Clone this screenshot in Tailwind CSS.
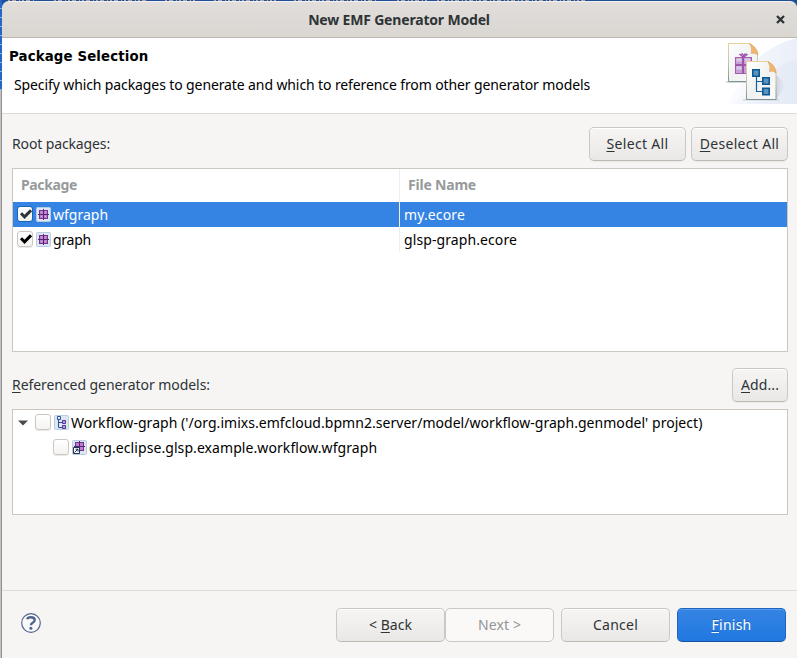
<!DOCTYPE html>
<html lang="en">
<head>
<meta charset="utf-8">
<title>New EMF Generator Model</title>
<script src="https://cdn.jsdelivr.net/npm/@tailwindcss/browser@4"></script>
</head>
<body class="h-[658px] w-[797px] overflow-hidden bg-[#1f55a5] font-['Noto_Sans',sans-serif] text-[14px] leading-5 text-[#2e3436]">
<svg width="0" height="0" class="absolute">
  <defs>
    <symbol id="pkg" viewBox="0 0 15 15">
      <rect x=".5" y=".5" width="14" height="14" rx="1" fill="#dce7f2" stroke="#b9cde2"/>
      <rect x="3.5" y="3.5" width="8" height="8" fill="#b982c8" stroke="#733291"/>
      <path d="M7.5 2v11M2 7.5h11" stroke="#5a2378"/>
      <path d="M5 5h1M9 5h1M5 9.5h1M9 9.5h1" stroke="#d3a8dc"/>
    </symbol>
  </defs>
</svg>
<div class="relative h-full w-full overflow-hidden">
  <div class="absolute inset-x-0 top-0 h-[3px] bg-[#1f4f96]"></div>
  <svg class="absolute top-0 left-0" width="600" height="2" viewBox="0 0 600 2"><path d="M8 .5h28M54 .5h92M165 .5h31M214 .5h62M294 .5h84M397 .5h32M437 .5h150" stroke="#a9a6ac" stroke-dasharray="2 2 4 3 1 2"/></svg>
  <div class="absolute top-0 left-0 h-[90px] w-[2px] bg-[repeating-linear-gradient(#2468c4_0_8px,#8fb0dc_8px_9px)]"></div>
  <div class="absolute top-[90px] bottom-0 left-0 w-[2px] bg-linear-to-r from-[#c4c4c4] from-50% to-[#8f8f8f] to-50%"></div>

  <div class="relative ml-[2px] flex h-full flex-col pt-[1px]">
    <header class="relative flex h-[37px] shrink-0 items-center justify-center rounded-t-[7px] border-t border-b border-t-[#f3f1f0] border-b-[#bfb8b1] bg-linear-to-b from-[#e1dedb] to-[#dad6d2] pr-[1px]">
      <h1 class="mt-px text-[14px] font-bold tracking-[-0.18px]">New EMF Generator Model</h1>
      <svg class="absolute top-[13px] right-[12px]" width="9" height="9" viewBox="0 0 9 9"><path d="M1 1l7 7M8 1L1 8" stroke="#2e3436" stroke-width="2.3"/></svg>
    </header>

    <section class="flex h-[76px] shrink-0 justify-between border-b border-[#dcdcda] bg-white text-black">
      <div>
        <h2 class="mt-[9px] ml-[7px] font-['DejaVu_Sans',sans-serif] text-[13.33px] font-bold tracking-[0.13px]">Package Selection</h2>
        <p class="mt-[8px] ml-[12px] whitespace-nowrap tracking-[-0.109px]">Specify which packages to generate and which to reference from other generator models</p>
      </div>
      <svg width="75" height="66" viewBox="722 38 75 66" class="shrink-0">
        <defs>
          <linearGradient id="wash" gradientUnits="userSpaceOnUse" x1="722" x2="797" y1="0" y2="0"><stop offset="0" stop-color="#dfe6f6" stop-opacity="0"/><stop offset=".5" stop-color="#dfe6f6" stop-opacity=".5"/><stop offset="1" stop-color="#dce4f5" stop-opacity=".75"/></linearGradient>
          <linearGradient id="sheet" x1="0" x2="1" y1="0" y2="1"><stop offset="0" stop-color="#fff"/><stop offset=".5" stop-color="#f0f2f1"/><stop offset="1" stop-color="#fbfbfa"/></linearGradient>
          <linearGradient id="edge" x1="0" x2="0" y1="0" y2="1"><stop offset="0" stop-color="#ecd09a"/><stop offset=".5" stop-color="#c2c3ae"/><stop offset="1" stop-color="#7f9490"/></linearGradient>
          <linearGradient id="shade" x1="0" x2="1" y1="0" y2="0"><stop offset="0" stop-color="#a9acb8" stop-opacity=".7"/><stop offset="1" stop-color="#c5cad8" stop-opacity="0"/></linearGradient>
        </defs>
        <path d="M722 104C742 92 745 68 763 54Q780 42 797 38V104z" fill="url(#wash)" opacity=".8"/>
        <path d="M722 104C765 93 768 63 797 60V104z" fill="url(#wash)" opacity=".6"/>
        <path d="M726 81h22v2h-22z" fill="#bfc0cc" opacity=".6"/>
        <path d="M776 75l10 9-10 16z" fill="url(#shade)" opacity=".6"/>
        <path d="M743 99h36v1.500h-36z" fill="#b8bbc8" opacity=".5"/>
        <path d="M728.500 43.500h21.500q5 4 7.500 10v28h-29z" fill="url(#sheet)" stroke="url(#edge)"/>
        <path d="M749.500 43.500q8 4 8.500 11.500q-3.500-3-6.500-1.500q1-6-2-10z" fill="#f2b56e" stroke="#d99e58" stroke-width=".6"/>
        <g stroke="#a45db0" fill="#c8a0d6"><rect x="735.500" y="57.500" width="7" height="7"/><rect x="743.500" y="57.500" width="8" height="7"/><rect x="735.500" y="65.500" width="7" height="8"/><rect x="743.500" y="65.500" width="8" height="8"/></g>
        <path d="M736.500 58.500h5v3h-5zM745 58.500h5v3h-5zM736.500 66.500h5v3h-5z" fill="#dccbe8"/>
        <path d="M743 57v17M735 65h17" stroke="#9a52a8" stroke-width="1.200"/>
        <path d="M743 57l-3-2.500 2.500-.5 1 2 1.500-2 2 .5-3 2.500" stroke="#9b4dab" fill="none" stroke-width="1.200"/>
        <path d="M746.500 61.500h21.500q5.500 4 8 10v28h-29.500z" fill="url(#sheet)" stroke="url(#edge)"/>
        <path d="M768 61.500q8 4 8 11.500q-3-3-6.500-1.500q1.500-5-1.500-10z" fill="#f2b56e" stroke="#d99e58" stroke-width=".6"/>
        <path d="M756.500 76v15.500h7M756.500 81.500h7" stroke="#16609b" fill="none" stroke-width="1.200"/>
        <g fill="#5794c2" stroke="#115892" stroke-width="1.600"><path d="M752.800 69.800h6.400v6.400h-6.400zM762.800 77.800h6.400v6.400h-6.400zM762.800 88.300h6.400v6.400h-6.400z"/></g>
      </svg>
    </section>

    <main class="flex h-[477px] shrink-0 flex-col border-b border-[#dcdcda] bg-[#f6f5f4] pr-[9px] pl-[10px]">
      <div class="mt-[13px] flex h-[34px] shrink-0 items-center">
        <span class="flex-1 tracking-[-0.13px]">Root packages:</span>
        <button class="mr-[5px] h-[34px] w-[97px] rounded-[5px] border border-[#cdc7c2] border-b-[#bfb8b1] bg-linear-to-b from-[#f6f5f4] to-[#eae8e6] tracking-[0.333px] shadow-[inset_0_1px_#fff,0_1px_1px_#0000000c]"><span class="underline underline-offset-2">S</span>elect All</button>
        <button class="h-[34px] w-[97px] rounded-[5px] border border-[#cdc7c2] border-b-[#bfb8b1] bg-linear-to-b from-[#f6f5f4] to-[#eae8e6] tracking-[0.3px] whitespace-nowrap shadow-[inset_0_1px_#fff,0_1px_1px_#0000000c]"><span class="underline underline-offset-2">D</span>eselect All</button>
      </div>
      <div class="mt-[7px] h-[184px] shrink-0 border border-[#cbc6c0] bg-white text-black">
        <div class="flex h-[33px] font-bold text-[#979a9b]">
          <div class="w-[387px] border-r border-[#eeeeed] pt-[6px] pl-[8px] tracking-[-0.368px]">Package</div>
          <div class="pt-[6px] pl-[8px] tracking-[-0.202px]">File Name</div>
        </div>
        <div class="flex h-[25px] bg-[#3584e4] text-white">
          <div class="flex w-[387px] items-center border-r border-[#eeeeed] pl-[4px]">
            <span class="mb-[2px] size-[16px] rounded-[3px] border border-[#1b62b8] bg-linear-to-b from-white to-[#f1f0ef]"><svg width="14" height="14" viewBox="0 0 14 14"><path d="M3 6.300l3.500 3.500 6.500-6.500" fill="none" stroke="#2e3436" stroke-width="3"/></svg></span>
            <svg class="mb-px ml-[3px]" width="15" height="15"><use href="#pkg"/></svg>
            <span class="ml-[2px]">wfgraph</span>
          </div>
          <span class="pt-[3px] pl-[4px] tracking-[0.137px]">my.ecore</span>
        </div>
        <div class="flex h-[25px]">
          <div class="flex w-[387px] items-center border-r border-[#eeeeed] pl-[4px]">
            <span class="mb-[2px] size-[16px] rounded-[3px] border border-[#cdc7c2] bg-linear-to-b from-white to-[#f4f3f2] shadow-[0_1px_1px_#00000018]"><svg width="14" height="14" viewBox="0 0 14 14"><path d="M3 6.300l3.500 3.500 6.500-6.500" fill="none" stroke="#000" stroke-width="3"/></svg></span>
            <svg class="mb-px ml-[3px]" width="15" height="15"><use href="#pkg"/></svg>
            <span class="ml-[2px] tracking-[-0.246px]">graph</span>
          </div>
          <span class="pt-[3px] pl-[4px] tracking-[0.093px]">glsp-graph.ecore</span>
        </div>
      </div>
      <div class="mt-[16px] flex h-[34px] shrink-0 items-center justify-between">
        <span class="tracking-[-0.062px]"><span class="underline underline-offset-2">R</span>eferenced generator models:</span>
        <button class="h-[34px] w-[56px] rounded-[5px] border border-[#cdc7c2] border-b-[#bfb8b1] bg-linear-to-b from-[#f6f5f4] to-[#eae8e6] tracking-[0.096px] shadow-[inset_0_1px_#fff,0_1px_1px_#0000000c]"><span class="underline underline-offset-2">A</span>dd...</button>
      </div>
      <div class="mt-[7px] h-[106px] shrink-0 border border-[#cbc6c0] bg-white text-black">
        <div class="flex h-[25px] items-center pl-[5px]">
          <svg width="10" height="6" viewBox="0 0 10 6"><path d="M0 .5h10L5 5.500z" fill="#4a4a4a"/></svg>
          <span class="mb-[2px] ml-[7px] size-[16px] rounded-[3px] border border-[#cdc7c2] bg-linear-to-b from-white to-[#f4f3f2] shadow-[0_1px_1px_#00000018]"></span>
          <svg class="ml-[3px]" width="15" height="15" viewBox="0 0 15 15"><rect x=".5" y=".5" width="14" height="14" rx="1" fill="#dce7f2" stroke="#b9cde2"/><path d="M4.500 5v7.500h4M4.500 7.500h4" fill="none" stroke="#2f4f94"/><path d="M3.500 1.500h3v3h-3z" fill="#e6effa" stroke="#2f5294"/><path d="M8.500 5.500h3v3h-3zM8.500 10.500h3v3h-3z" fill="#cf96dc" stroke="#4b3a9c"/></svg>
          <span class="ml-[2px] whitespace-nowrap tracking-[0.04px]">Workflow-graph ('/org.imixs.emfcloud.bpmn2.server/model/workflow-graph.genmodel' project)</span>
        </div>
        <div class="flex h-[25px] items-center pl-[40px]">
          <span class="mb-[2px] size-[16px] rounded-[3px] border border-[#cdc7c2] bg-linear-to-b from-white to-[#f4f3f2] shadow-[0_1px_1px_#00000018]"></span>
          <svg class="mb-px ml-[3px]" width="15" height="15" viewBox="0 0 15 15"><rect x=".5" y=".5" width="14" height="14" rx="1" fill="#dce7f2" stroke="#b9cde2"/><rect x="3.500" y="2.500" width="8" height="8" fill="#b982c8" stroke="#733291"/><path d="M7.500 1v11M2 6.500h11" stroke="#5a2378"/><path d="M1.500 7.500h6v6h-6z" fill="#fff" stroke="#1f3357"/><path d="M2.500 12.500l3.500-3.500M3.500 9.200h2.500v2.500" fill="none" stroke="#1f3357"/></svg>
          <span class="ml-[2px] whitespace-nowrap tracking-[0.078px]">org.eclipse.glsp.example.workflow.wfgraph</span>
        </div>
      </div>
    </main>

    <footer class="flex flex-1 items-start bg-[#f6f5f4] pt-[17px] pr-[11px] pl-[19px]">
      <svg class="mt-[5px] mr-auto" width="20" height="20" viewBox="0 0 20 20"><circle cx="10" cy="10" r="9.300" fill="#fafafa" stroke="#506690" stroke-width="1.200"/><path d="M6.300 6.300q.3-2 3.600-2 3.800 0 3.800 2.900 0 1.500-2 2.500-1.700.9-1.700 2.500" fill="none" stroke="#4d6491" stroke-width="2.400"/><circle cx="9.900" cy="15.300" r="1.500" fill="#4d6491"/></svg>
      <button class="h-[34px] w-[109px] rounded-[5px] border border-[#cdc7c2] border-b-[#bfb8b1] bg-linear-to-b from-[#f6f5f4] to-[#eae8e6] tracking-[0.034px] shadow-[inset_0_1px_#fff]">&lt; <span class="underline underline-offset-2">B</span>ack</button>
      <button class="h-[34px] w-[109px] rounded-[5px] border border-[#cdc7c2] bg-[#faf9f8] tracking-[0.106px] text-[#929595]">Next &gt;</button>
      <button class="ml-[7px] h-[34px] w-[109px] rounded-[5px] border border-[#cdc7c2] border-b-[#bfb8b1] bg-linear-to-b from-[#f6f5f4] to-[#eae8e6] tracking-[0.236px] shadow-[inset_0_1px_#fff]">Cancel</button>
      <button class="ml-[7px] h-[34px] w-[109px] rounded-[5px] border border-[#1b66c4] border-b-[#15539e] bg-linear-to-b from-[#3584e4] to-[#2078e0] tracking-[0.25px] text-white shadow-[inset_0_1px_#5b9cea] text-shadow-[0_-1px_#0f4a9688]"><span class="underline underline-offset-2">F</span>inish</button>
    </footer>
  </div>
</div>
</body>
</html>
